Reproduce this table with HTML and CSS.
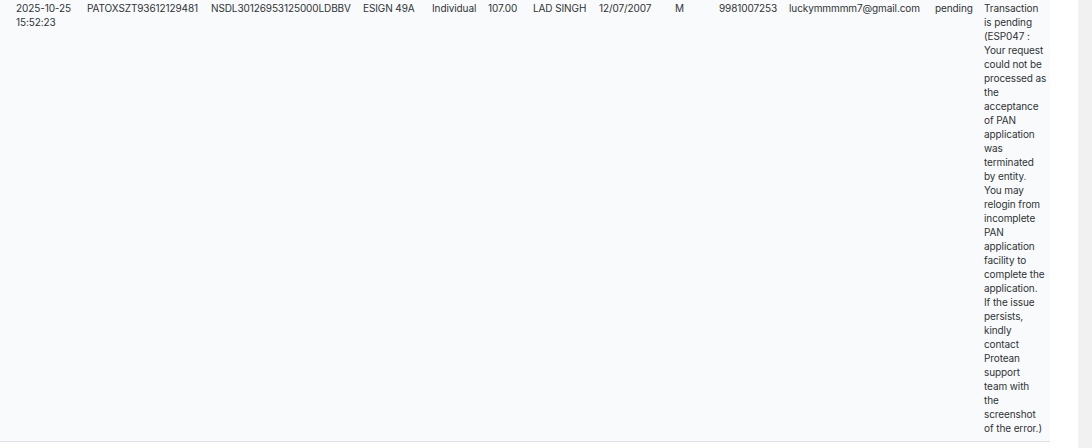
FILE: index.html
```html
<!DOCTYPE html>
<html>
<head>
<meta charset="utf-8">
<link rel="stylesheet" href="styles.css">
</head>
<body>
<div class="page">
  <div class="main">
    <table class="tx">
      <tbody>
        <tr>
          <td class="w1 first"><span class="nw">2025-10-25</span> <span class="nw">15:52:23</span></td>
          <td class="w2 nw">PATOXSZT93612129481</td>
          <td class="w3 nw">NSDL30126953125000LDBBV</td>
          <td class="w4 nw">ESIGN 49A</td>
          <td class="w5 nw">Individual</td>
          <td class="w6 nw">107.00</td>
          <td class="w7 nw">LAD SINGH</td>
          <td class="w8 nw">12/07/2007</td>
          <td class="w9 nw">M</td>
          <td class="w10 nw">9981007253</td>
          <td class="w11 nw">luckymmmmm7@gmail.com</td>
          <td class="w12 nw">pending</td>
          <td class="w13 msg">Transaction<br>is pending<br>(ESP047 :<br>Your request<br>could not be<br>processed as<br>the<br>acceptance<br>of PAN<br>application<br>was<br>terminated<br>by entity.<br>You may<br>relogin from<br>incomplete<br>PAN<br>application<br>facility to<br>complete the<br>application.<br>If the issue<br>persists,<br>kindly<br>contact<br>Protean<br>support<br>team with<br>the<br>screenshot<br>of the error.)</td>
        </tr>
      </tbody>
    </table>
  </div>
  <div class="track"></div>
</div>
</body>
</html>
```
FILE: styles.css
```css
html, body {
  margin: 0;
  padding: 0;
  background: #ffffff;
}
.page {
  display: flex;
  width: 1092px;
  height: 448px;
  overflow: hidden;
}
.main {
  width: 1078px;
  background: #ffffff;
}
.track {
  width: 14px;
  background: #f1f1f1;
}
.tx {
  border-collapse: collapse;
  table-layout: fixed;
  width: 1050px;
  font-family: "Inter", "Noto Sans", sans-serif;
  font-size: 10px;
  letter-spacing: -0.1px;
  line-height: 14px;
  color: #2f3337;
}
.tx td {
  box-sizing: border-box;
  background: #f9fafb;
  vertical-align: top;
  padding: 1px 8px 6px 8px;
  border-bottom: 1px solid #dee2e6;
  white-space: normal;
  overflow: visible;
}
.w1 { width: 79px; }
.w2 { width: 124px; }
.w3 { width: 152px; }
.w4 { width: 69px; }
.w5 { width: 56px; }
.w6 { width: 45px; }
.w7 { width: 66px; }
.w8 { width: 76px; }
.w9 { width: 44px; }
.w10 { width: 70px; }
.w11 { width: 146px; }
.w12 { width: 49px; }
.w13 { width: 74px; }
.nw {
  white-space: nowrap;
}
.tx td.nw {
  white-space: nowrap;
}
.tx td.first {
  padding-left: 16px;
}
.tx td.msg {
  padding-right: 3px;
  white-space: nowrap;
}
```
